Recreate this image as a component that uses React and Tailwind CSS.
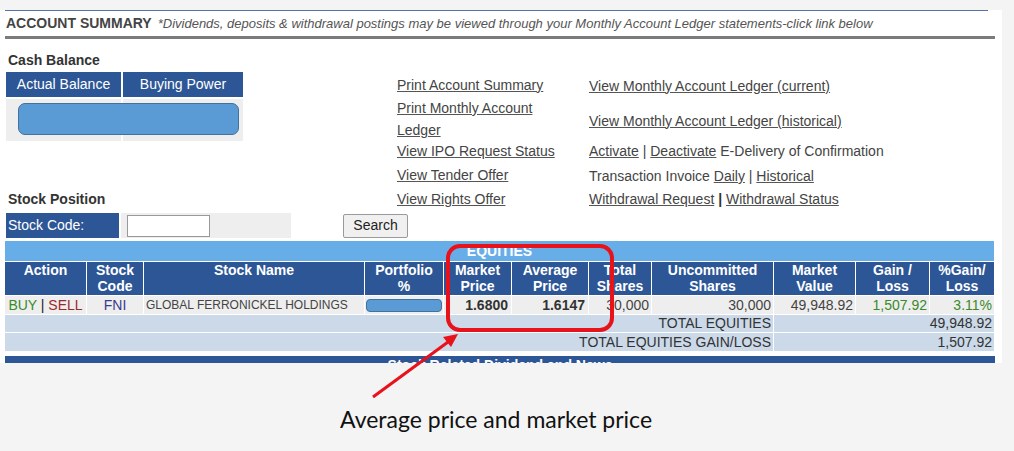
import React from 'react'

const HEADERS = [
  ['Action'],
  ['Stock', 'Code'],
  ['Stock Name'],
  ['Portfolio', '%'],
  ['Market', 'Price'],
  ['Average', 'Price'],
  ['Total', 'Shares'],
  ['Uncommitted', 'Shares'],
  ['Market', 'Value'],
  ['Gain /', 'Loss'],
  ['%Gain/', 'Loss'],
]

const COLS = [81, 56, 220, 78, 67, 76, 62, 121, 81, 73, 64]

function Lnk({ children }) {
  return <span className="underline decoration-[#555]">{children}</span>
}

export default function App() {
  return (
    <div className="relative w-[1014px] h-[451px] bg-[#f4f4f4] overflow-hidden font-['Liberation_Sans',Arial,sans-serif] text-[#333]">
      {/* white page panel */}
      <div className="mt-[10px] w-[1002px] h-[353px] bg-white overflow-hidden pl-[5px]">
        <div className="h-px w-[983px] bg-[#5473a8]" />
        <div className="h-[25px] flex items-center pl-px text-[#444] whitespace-nowrap">
          <span className="font-bold text-[14px]">ACCOUNT SUMMARY</span>
          <span className="italic text-[13px] text-[#555] ml-[6px]">
            *Dividends, deposits &amp; withdrawal postings may be viewed through your Monthly Account Ledger statements-click link below
          </span>
        </div>
        <div className="h-[3px] w-[990px] bg-[#7b7b7b]" />

        <div className="flex">
          {/* left column */}
          <div className="w-[392px] shrink-0 pt-[13px]">
            <div className="h-[16px] leading-[16px] text-[14px] font-bold text-[#333] pl-[3px]">Cash Balance</div>
            <div className="relative mt-[4px] ml-px w-[237px]">
              <div className="flex gap-[2px]">
                <div className="w-[115px] h-[25px] bg-[#2d5696] text-white text-[14px] flex items-center justify-center">Actual Balance</div>
                <div className="w-[120px] h-[25px] bg-[#2d5696] text-white text-[14px] flex items-center justify-center">Buying Power</div>
              </div>
              <div className="flex gap-[2px] mt-[2px]">
                <div className="w-[115px] h-[42px] bg-[#eeeeee]" />
                <div className="w-[120px] h-[42px] bg-[#eeeeee]" />
              </div>
              <div className="absolute left-[12px] top-[31px] w-[221px] h-[32px] rounded-[7px] bg-[#5b9bd5] border border-[#41719c]" />
            </div>

            <div className="mt-[50px] h-[16px] leading-[16px] text-[14px] font-bold text-[#333] pl-[3px]">Stock Position</div>
            <div className="mt-[6px] flex items-center h-[25px] ml-px">
              <div className="w-[113px] shrink-0 h-[25px] bg-[#2d5696] text-white text-[14px] flex items-center pl-[2px]">Stock Code:</div>
              <div className="w-[170px] shrink-0 h-[25px] bg-[#eeeeee] ml-[2px] flex items-center pl-[6px]">
                <div className="w-[83px] h-[22px] bg-white border border-[#999]" />
              </div>
              <button className="ml-[52px] shrink-0 w-[65px] h-[24px] bg-[#f0f0f0] border border-[#9a9a9a] rounded-[2px] text-[14px] text-[#222]">Search</button>
            </div>
          </div>

          {/* links */}
          <div className="mt-[34px] grid grid-cols-[192px_1fr] grid-rows-[24px_44px_21px_26px_22px] text-[14px] text-[#444]">
            <div className="flex items-center"><Lnk>Print Account Summary</Lnk></div>
            <div className="flex items-center pt-[2px]"><Lnk>View Monthly Account Ledger (current)</Lnk></div>
            <div className="leading-[22px]"><Lnk>Print Monthly Account</Lnk><br /><Lnk>Ledger</Lnk></div>
            <div className="flex items-center pt-[4px]"><Lnk>View Monthly Account Ledger (historical)</Lnk></div>
            <div className="flex items-center"><Lnk>View IPO Request Status</Lnk></div>
            <div className="flex items-center">
              <Lnk>Activate</Lnk>&nbsp;|&nbsp;<Lnk>Deactivate</Lnk>&nbsp;E-Delivery of Confirmation
            </div>
            <div className="flex items-center"><Lnk>View Tender Offer</Lnk></div>
            <div className="flex items-center pt-[3px]">
              Transaction Invoice&nbsp;<Lnk>Daily</Lnk>&nbsp;|&nbsp;<Lnk>Historical</Lnk>
            </div>
            <div className="flex items-center"><Lnk>View Rights Offer</Lnk></div>
            <div className="flex items-center">
              <Lnk>Withdrawal Request</Lnk>&nbsp;<span className="font-bold text-[#333]">|</span>&nbsp;<Lnk>Withdrawal Status</Lnk>
            </div>
          </div>
        </div>

        {/* equities table */}
        <table className="mt-[2px] table-fixed border-separate border-spacing-[1px] w-[991px] -ml-px text-[14px]">
          <colgroup>
            {COLS.map((w, i) => (
              <col key={i} style={{ width: w }} />
            ))}
          </colgroup>
          <tbody>
            <tr>
              <td colSpan={11} className="h-[20px] bg-[#67aee8] text-white font-bold text-center leading-[20px] p-0">EQUITIES</td>
            </tr>
            <tr>
              {HEADERS.map((h, i) => (
                <td key={i} className="h-[33px] bg-[#2d5696] text-white font-bold text-center align-top leading-[16px] p-0">
                  {h[0]}
                  {h[1] && <br />}
                  {h[1]}
                </td>
              ))}
            </tr>
            <tr className="bg-[#eeeeee] h-[18px] leading-[18px]">
              <td className="p-0 text-center whitespace-nowrap">
                <span className="text-[#3a8a2a]">BUY</span> <span className="text-[#222]">|</span> <span className="text-[#9b2b2b]">SELL</span>
              </td>
              <td className="p-0 text-center text-[#3b3b8f]">FNI</td>
              <td className="p-0 pl-[2px] text-[12px] text-[#444] whitespace-nowrap">GLOBAL FERRONICKEL HOLDINGS</td>
              <td className="p-0 px-px">
                <div className="h-[13px] rounded-[4px] bg-[#5b9bd5] border border-[#41719c]" />
              </td>
              <td className="p-0 pr-[3px] text-right font-bold text-[#333]">1.6800</td>
              <td className="p-0 pr-[3px] text-right font-bold text-[#333]">1.6147</td>
              <td className="p-0 pr-[2px] text-right text-[#444]">30,000</td>
              <td className="p-0 pr-[2px] text-right text-[#444]">30,000</td>
              <td className="p-0 pr-[2px] text-right text-[#444]">49,948.92</td>
              <td className="p-0 pr-[2px] text-right text-[#3a8a2a]">1,507.92</td>
              <td className="p-0 pr-[2px] text-right text-[#3a8a2a]">3.11%</td>
            </tr>
            <tr className="bg-[#cbd9e8] h-[17px] leading-[17px] text-[#333]">
              <td colSpan={8} className="p-0 pr-[2px] text-right">TOTAL EQUITIES</td>
              <td colSpan={3} className="p-0 pr-[2px] text-right">49,948.92</td>
            </tr>
            <tr className="bg-[#cbd9e8] h-[18px] leading-[18px] text-[#333]">
              <td colSpan={8} className="p-0 pr-[2px] text-right">TOTAL EQUITIES GAIN/LOSS</td>
              <td colSpan={3} className="p-0 pr-[2px] text-right">1,507.92</td>
            </tr>
          </tbody>
        </table>
        <div className="mt-[4px] w-[990px] h-[20px] bg-[#2d5696] text-white font-bold text-[14px] text-center leading-[16px] pt-px">
          Stock Related Dividend and News
        </div>
      </div>

      {/* caption */}
      <div className="mt-[42px] pl-[340px] font-['Lato',sans-serif] text-[23px] leading-[28px] text-[#111]">
        Average price and market price
      </div>

      {/* annotation overlay */}
      <div className="absolute left-[446px] top-[244px] w-[168px] h-[88px] border-[4px] border-[#e8121b] rounded-[14px]" />
      <svg className="absolute left-[360px] top-[325px]" width="110" height="80" viewBox="0 0 110 80">
        <line x1="13" y1="72" x2="88" y2="17" stroke="#e8121b" strokeWidth="3" />
        <polygon points="98,9 91,22 83,12" fill="#e8121b" />
      </svg>
    </div>
  )
}
